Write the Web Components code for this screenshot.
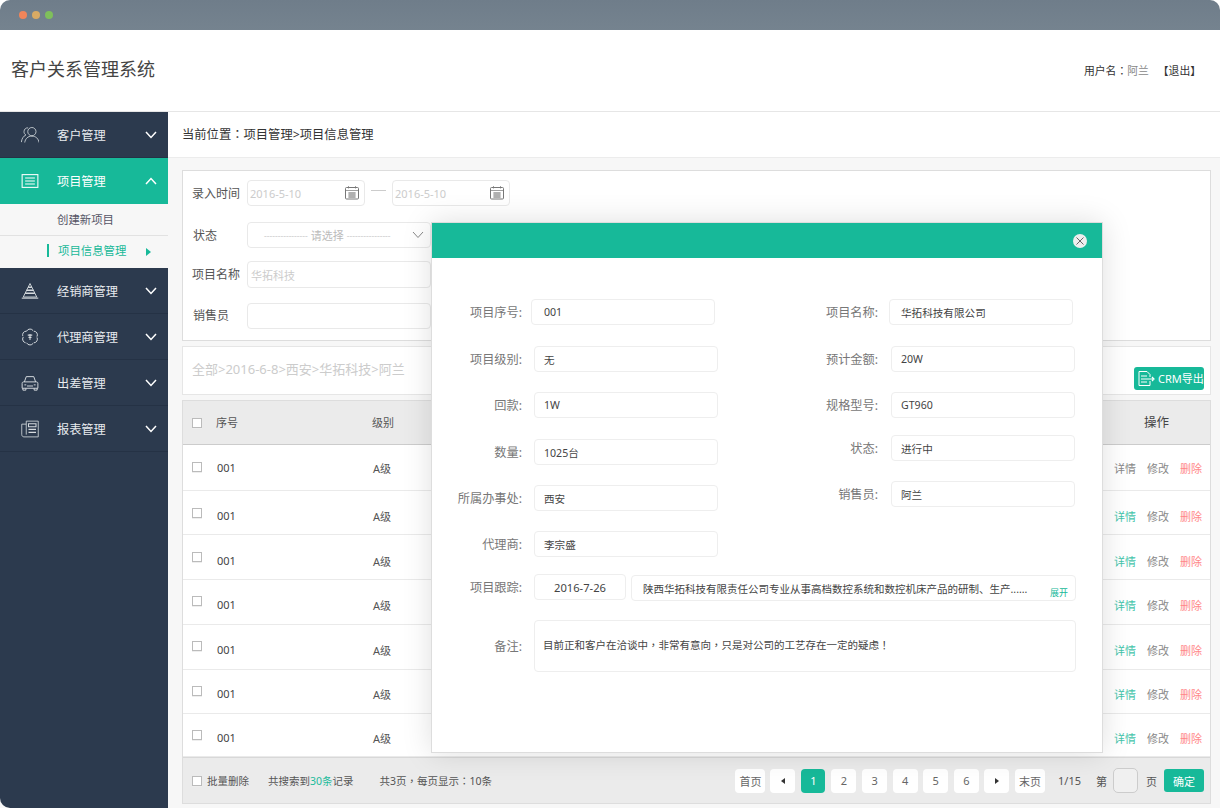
<!DOCTYPE html>
<html lang="zh-Hans"><head><meta charset="utf-8"><title>客户关系管理系统</title>
<style>
html,body{margin:0;padding:0;background:#fff;}
body{font-family:"Noto Sans","Noto Sans CJK SC",sans-serif;font-size:12px;color:#444;}
</style></head><body>
<crm-app>
  <title-bar slot="top"></title-bar>
  <app-header slot="top" title="客户关系管理系统"></app-header>
  <side-nav slot="side">
    <nav-item icon="people">客户管理</nav-item>
    <nav-item icon="list" active>项目管理</nav-item>
    <sub-item>创建新项目</sub-item>
    <sub-item current>项目信息管理</sub-item>
    <nav-item icon="pyramid">经销商管理</nav-item>
    <nav-item icon="flower">代理商管理</nav-item>
    <nav-item icon="car">出差管理</nav-item>
    <nav-item icon="paper">报表管理</nav-item>
  </side-nav>
  <main-area slot="main">
    <bread-bar>当前位置<span lang="zh-Hant" style='font-family:"Noto Sans CJK TC",sans-serif'>：</span>项目管理&gt;项目信息管理</bread-bar>
    <filter-panel></filter-panel>
    <crumb-panel></crumb-panel>
    <data-table></data-table>
  </main-area>
  <detail-modal slot="over"></detail-modal>
</crm-app>
<script>
const P=s=>`<span class="cp" lang="zh-Hant">${s}</span>`;
function def(name, css, html, setup){
  customElements.define(name, class extends HTMLElement{
    constructor(){super();const r=this.attachShadow({mode:'open'});
      r.innerHTML='<style>.cp{font-family:"Noto Sans CJK TC",sans-serif;}'+css+'</style>'+html;}
    connectedCallback(){ if(setup&&!this._d){this._d=1;setup(this,this.shadowRoot);} }
  });
}
const ICONS={
 people:'<circle cx="14.500" cy="7.500" r="5.500"/><path d="M5 22c.7-5 4-8.500 9.500-8.500s8.800 3.500 9.500 8.500"/><path d="M9.500 2.500C6.500 2 4 4.500 4 7.500c0 2 .8 3.500 2.500 4.500C3 13.500 1 17 .5 21.500"/>',
 list:'<rect x="1.500" y="3.500" width="21" height="17" stroke-width="1.400"/><path d="M5.500 8h13M5.500 12h13M5.500 16h13" stroke-width="1.400"/>',
 pyramid:'<path d="M12 2 3 20h18z" stroke-width="1.200"/><path d="M9.500 7h5M7.500 11h9M5.500 15h13" stroke-width="1.900"/><path d="M1 21.500h22" stroke-width="1.500"/>',
 flower:'<path d="M7.500 4.200A5 5 0 0 1 16.500 4.200A5 5 0 0 1 21 12A5 5 0 0 1 16.500 19.800A5 5 0 0 1 7.500 19.800A5 5 0 0 1 3 12A5 5 0 0 1 7.500 4.200z" stroke-dasharray="9.900 1.300" stroke-width="1.300"/><path d="M9 9.500h6M12 8v8M10 12.500h4" stroke-width="1.400"/>',
 car:'<path d="M4.500 10.500 7 3.500h10l2.500 7" stroke-width="1.300"/><path d="M1.500 12.500c0-1.300.9-2 2.200-2h16.600c1.300 0 2.200.7 2.200 2V19h-21z" stroke-width="1.300"/><path d="M2.500 19v2.500h4V19M17.500 19v2.500h4V19M8 16h8M4.500 14.500H7M17 14.500h2.500" stroke-width="1.300"/>',
 paper:'<path d="M7 1.500h16v21H4c-1.700 0-3-1.300-3-3V5.500h6"/><path d="M7 1.500v18"/><path d="M10 5h10v4H10zM10 12.500h10M10 16.500h10" stroke-width="1.400"/>'
};
const chev=(up)=>`<svg width="12" height="8" viewBox="0 0 12 8" fill="none" stroke="#fff" stroke-width="1.500"><path d="${up?'M1 7l5-5.500L11 7':'M1 1l5 5.500L11 1'}"/></svg>`;

def('crm-app',`:host{display:grid;grid-template-columns:168px 1fr;grid-template-rows:auto 1fr;width:1220px;height:808px;position:relative;overflow:hidden;border-radius:10px 10px 0 0;background:#f7f7f7;}
.top{grid-column:1/3;display:flex;flex-direction:column;}.side{display:flex;min-height:0;border-bottom-left-radius:10px;overflow:hidden;}.main{display:flex;min-width:0;min-height:0;}`,
`<div class="top"><slot name="top"></slot></div><div class="side"><slot name="side"></slot></div><div class="main"><slot name="main"></slot></div><slot name="over"></slot>`);

def('title-bar',`:host{display:flex;align-items:center;gap:5px;height:30px;padding-left:19px;box-sizing:border-box;background:linear-gradient(#6f7d8a,#75838f);}
i{width:8px;height:8px;border-radius:50%;display:block;}`,
`<i style="background:#f1855a"></i><i style="background:#d8aa64"></i><i style="background:#7fbf5b"></i>`);

def('app-header',`:host{display:flex;align-items:center;justify-content:space-between;height:82px;box-sizing:border-box;background:#fff;border-bottom:1px solid #e6e6e6;padding:0 24px 0 11px;}
h1{margin:0 0 5px;font-size:18px;font-weight:400;color:#444;}
.u{font-size:10.800px;color:#333;display:flex;gap:9px;margin-bottom:2px;margin-right:-5px;}.u span span.n{color:#888;}`,
`<h1></h1><div class="u"><span>用户名${P('：')}<span class="n">阿兰</span></span><span>【退出】</span></div>`,
(h,r)=>{r.querySelector('h1').textContent=h.getAttribute('title');h.removeAttribute('title');});

def('side-nav',`:host{display:block;width:168px;background:#2c3a4e;}`,`<slot></slot>`);

def('nav-item',`:host{display:flex;align-items:center;height:46px;box-sizing:border-box;padding-left:21px;color:#e8ebee;font-size:12.200px;border-bottom:1px solid #253245;}
:host([active]){background:#17b999;color:#fff;border-bottom:0;}
svg.ic{width:18px;height:18px;fill:none;stroke:#d5dade;stroke-width:1.100;flex:none;margin-right:18px;}
:host([active]) svg.ic{stroke:#fff;}
.t{flex:1;}.c{margin-right:11px;display:flex;}`,
`<svg class="ic" viewBox="0 0 24 24"></svg><span class="t"><slot></slot></span><span class="c"></span>`,
(h,r)=>{r.querySelector('.ic').innerHTML=ICONS[h.getAttribute('icon')];r.querySelector('.c').innerHTML=chev(h.hasAttribute('active'));});

def('sub-item',`:host{display:flex;align-items:center;height:32px;box-sizing:border-box;padding:0 17px 1px 57px;font-size:11.400px;color:#556;background:#f7f7f7;border-bottom:1px solid #e2e2e2;position:relative;}
:host([current]){color:#17b999;padding-left:58px;padding-bottom:4px;justify-content:space-between;border-bottom:0;}
.bar,.arr{display:none;}
:host([current]) .bar{display:block;position:absolute;left:47px;top:8px;width:2px;height:13px;background:#17b999;}
:host([current]) .arr{display:block;width:0;height:0;margin-top:3px;border-left:5px solid #17b999;border-top:4px solid transparent;border-bottom:4px solid transparent;}`,
`<span class="bar"></span><span><slot></slot></span><span class="arr"></span>`);

def('main-area',`:host{display:flex;flex-direction:column;flex:1;min-width:0;background:#f7f7f7;}`,`<slot></slot>`);

def('bread-bar',`:host{display:flex;align-items:center;height:46px;box-sizing:border-box;background:#fff;border-bottom:1px solid #ececec;padding:0 0 2px 14px;font-size:12.300px;color:#333;margin-bottom:12px;}`,`<slot></slot>`);

def('date-input',`:host{display:flex;align-items:center;justify-content:space-between;width:118px;height:26px;box-sizing:border-box;border:1px solid #e9e9e9;border-radius:4px;padding:0 4px 0 2px;color:#ccc;font-size:11px;background:#fff;}
svg{width:16px;height:16px;fill:none;stroke:#777;stroke-width:1;}`,
`<span><slot></slot></span><svg viewBox="0 0 16 16"><rect x="1.500" y="2.500" width="13" height="11.500" rx="1"/><path d="M1.500 5.500h13M4.500 1v2.500M11.500 1v2.500M4 8h8M4 10h8M4 12h8M6 7v6M8 7v6M10 7v6" stroke-width=".7"/></svg>`);

def('filter-panel',`:host{display:flex;flex-direction:column;margin:0 9px 0 14px;height:171px;box-sizing:border-box;border:1px solid #ddd;background:#fff;padding:9px 0 0 9px;font-size:12px;color:#555;}
.r{display:flex;align-items:center;height:26px;}
.r+.r{margin-top:16px}.r.b{margin-top:13px;height:27px}.r.c{margin-top:15px}
label{width:55px;flex:none;}label.n{padding-left:1px;width:54px;}
.r.b label{margin-bottom:2px}.r.c label{margin-bottom:3px}
.box{border:1px solid #e9e9e9;border-radius:4px;height:100%;box-sizing:border-box;width:184px;flex:none;display:flex;align-items:center;padding-left:3px;color:#ccc;font-size:11px;background:#fff;}
.d{width:15px;height:1px;background:#ccc;margin:0 6px 6px;}
.sel{justify-content:space-between;padding:0 6px 0 16px;color:#bbb;}
.sel span{white-space:nowrap;display:flex;gap:3px;align-items:center;}
.sel u{text-decoration:none;font-size:8.500px;color:#ccc;}
svg{width:12px;height:8px;fill:none;stroke:#888;flex:none;}`,
`<div class="r"><label>录入时间</label><date-input>2016-5-10</date-input><span class="d"></span><date-input>2016-5-10</date-input></div>
<div class="r"><label class="n">状态</label><div class="box sel"><span><u>----------------</u>请选择<u>----------------</u></span><svg viewBox="0 0 12 8"><path d="M1 1l5 5.500L11 1"/></svg></div></div>
<div class="r b"><label>项目名称</label><div class="box">华拓科技</div></div>
<div class="r c"><label class="n">销售员</label><div class="box"></div></div>`);

def('crumb-panel',`:host{display:flex;align-items:center;justify-content:space-between;margin:5px 9px 0 14px;height:49px;box-sizing:border-box;border:1px solid #e6e6e6;background:#fff;padding:0 6px 0 9px;font-size:13px;color:#ccc;}
.t{margin-bottom:4px}
.btn{display:flex;align-items:center;gap:3px;width:70px;height:23px;box-sizing:border-box;padding-left:3px;background:#17b999;border-radius:3px;color:#fff;font-size:11px;margin-top:15px;white-space:nowrap;}
svg{width:18px;height:17px;fill:none;stroke:#fff;stroke-width:1;flex:none;}`,
`<span class="t">全部&gt;2016-6-8&gt;西安&gt;华拓科技&gt;阿兰</span><div class="btn"><svg viewBox="0 0 18 17"><path d="M10 1.500H2v14h11V11M10 1.500l3 3V7"/><path d="M4 6h6M4 9h8M4 12h6"/><path d="M12 9h4M15 7l2 2-2 2" stroke-width="1.200"/></svg>CRM导出</div>`);

def('check-box',`:host{display:block;width:10px;height:10px;box-sizing:border-box;border:1px solid #bbb;background:#fff;box-shadow:0 1px 0 #eee;}`,``);

def('data-table',`:host{display:flex;flex-direction:column;margin:5px 9px 0 14px;font-size:11px;color:#444;border-left:1px solid #ddd;border-right:1px solid #ddd;}
.g{display:grid;grid-template-columns:24px 156px 1fr 96px;padding-left:9px;box-sizing:border-box;}
.h{height:45px;background:#ebebeb;border-top:1px solid #ddd;border-bottom:1px solid #ccc;align-items:center;color:#555;}
.h span{margin-bottom:2px}
.h .op{font-size:12.500px;text-align:center;color:#444;padding-right:11px;margin-bottom:3px}
.row{background:#fff;border-bottom:1px solid #eaeaea;position:relative;align-items:start;}
.row>*{margin-top:var(--t);}
.row check-box{margin-top:var(--c);}
.n{padding-left:1px;}.lv{padding-left:1px;color:#555}
.a{display:flex;gap:11px;}.a b{font-weight:400;color:#1dbb9c;opacity:.85}.a b.g2{color:#888;opacity:1}.a b.r2{color:#f88;opacity:1}
.f{display:flex;align-items:center;height:47px;box-sizing:border-box;background:#ebebeb;border-top:1px solid #d8d8d8;border-bottom:1px solid #ddd;padding-left:9px;color:#555;font-size:10.500px;white-space:nowrap;}
.f em{font-style:normal;color:#1dbb9c;}
.f .s1{margin-left:5px;}.f .s2{margin-left:19px;}.f .s3{margin-left:26px;}
pager-bar{margin-left:auto;}`,
`<div class="g h"><check-box></check-box><span>序号</span><span>级别</span><span class="op">操作</span></div><div id="rows"></div>
<div class="f"><check-box></check-box><span class="s1">批量删除</span><span class="s2">共搜索到<em>30条</em>记录</span><span class="s3">共3页${P('，')}每页显示${P('：')}10条</span><pager-bar></pager-bar></div>`,
(h,r)=>{
  const spec=[[46,17,15],[44,17,17],[45,17,18],[45,16,17],[45,16,17],[44,16,16],[43,16,16]];
  r.getElementById('rows').innerHTML=spec.map((s,i)=>`<div class="g row" style="height:${s[0]}px;--c:${s[1]}px;--t:${s[2]}px"><check-box></check-box><span class="n">001</span><span class="lv">A级</span><span class="a"><b class="${i==0?'g2':''}">详情</b><b class="g2">修改</b><b class="r2">删除</b></span></div>`).join('');
});

def('pager-bar',`:host{display:flex;align-items:center;font-size:11px;color:#555;padding-right:6px;flex:none;}
.p{display:flex;align-items:center;justify-content:center;flex:none;width:25px;height:24px;background:#fff;border-radius:4px;margin-right:5.600px;color:#666;}
.w{width:30px;margin-right:6px;}.on{background:#17b999;color:#fff;width:24px;margin-right:6px;}
.tri{width:0;height:0;border-top:3.500px solid transparent;border-bottom:3.500px solid transparent;}
.l{border-right:4px solid #333}.rr{border-left:4px solid #333}
.info{margin-left:7px;}.nth{margin-left:15px;}
.in{width:25px;height:25px;box-sizing:border-box;border:1px solid #ccc;border-radius:5px;background:#f0f0f0;margin:0 8px 0 6px;}
.ok{display:flex;align-items:center;justify-content:center;width:40px;height:23px;background:#17b999;border-radius:3px;color:#fff;margin-left:7px;}`,
`<span class="p w" style="margin-right:5px">首页</span><span class="p" style="margin-right:6px"><i class="tri l"></i></span><span class="p on">1</span><span class="p">2</span><span class="p">3</span><span class="p">4</span><span class="p">5</span><span class="p">6</span><span class="p"><i class="tri rr"></i></span><span class="p w">末页</span><span class="info">1/15</span><span class="nth">第</span><span class="in"></span><span>页</span><span class="ok">确定</span>`);

def('m-field',`:host{display:flex;align-items:center;height:26px;font-size:12.200px;color:#777;}
label{flex:none;width:var(--lw,90px);text-align:right;white-space:nowrap;}
.v{flex:none;margin-left:var(--g,12px);width:var(--w,184px);height:26px;box-sizing:border-box;border:1px solid #eee;border-radius:4px;background:#fff;display:flex;align-items:center;padding-left:var(--p,9px);color:#444;font-size:10.600px;white-space:nowrap;}`,
`<label></label><div class="v"><slot></slot></div>`,
(h,r)=>{r.querySelector('label').textContent=h.getAttribute('label');h.removeAttribute('label');});

def('detail-modal',`:host{position:absolute;left:431px;top:222px;width:672px;height:531px;box-sizing:border-box;border:1px solid #ddd;background:#fff;box-shadow:0 0 28px rgba(0,0,0,.13);display:flex;flex-direction:column;}
.hd{flex:none;height:35px;background:#17b999;display:flex;align-items:center;justify-content:flex-end;padding-right:15px;}
.x{width:14px;height:14px;border-radius:50%;background:#eee;display:flex;}
.x svg{width:14px;height:14px;stroke:#666;stroke-width:1;}
.two{display:flex;padding-top:41px;}
.col{display:flex;flex-direction:column;}
.l{width:368px;}
.r{--lw:78px;--g:13px;}
.full{display:flex;height:26px;margin-top:17px;font-size:12.200px;color:#777;align-items:center;}
.lb{width:90px;text-align:right;flex:none;margin-right:12px;}
.bx{box-sizing:border-box;border:1px solid #eee;border-radius:4px;height:26px;display:flex;align-items:center;color:#444;font-size:10.500px;white-space:nowrap;}
.date{width:92px;justify-content:center;font-size:11.200px;}
.long{width:445px;margin:2px 0 0 5px;padding-left:11px;position:relative;}
.more{position:absolute;right:7px;bottom:1px;font-size:9px;color:#17b999;}
.note{height:52px;margin-top:20px;}
.note .bx{width:542px;height:52px;padding:0 0 4px 8px;font-size:10.500px;}`,
`<div class="hd"><span class="x"><svg viewBox="0 0 14 14"><path d="M3.500 3.500l7 7M10.500 3.500l-7 7"/></svg></span></div>
<div class="two"><div class="col l">
 <m-field label="项目序号:" style="--g:9px;--p:12px;">001</m-field>
 <m-field label="项目级别:" style="margin-top:21px">无</m-field>
 <m-field label="回款:" style="margin-top:20px">1W</m-field>
 <m-field label="数量:" style="margin-top:21px">1025台</m-field>
 <m-field label="所属办事处:" style="margin-top:20px">西安</m-field>
 <m-field label="代理商:" style="margin-top:20px">李宗盛</m-field>
</div><div class="col r">
 <m-field label="项目名称:" style="--g:11px;--p:11px">华拓科技有限公司</m-field>
 <m-field label="预计金额:" style="margin-top:21px">20W</m-field>
 <m-field label="规格型号:" style="margin-top:20px">GT960</m-field>
 <m-field label="状态:" style="margin-top:17px">进行中</m-field>
 <m-field label="销售员:" style="margin-top:20px">阿兰</m-field>
</div></div>
<div class="full"><span class="lb">项目跟踪:</span><span class="bx date">2016-7-26</span><span class="bx long">陕西华拓科技有限责任公司专业从事高档数控系统和数控机床产品的研制、生产......<span class="more">展开</span></span></div>
<div class="full note"><span class="lb">备注:</span><span class="bx"><span>目前正和客户在洽谈中${P('，')}非常有意向${P('，')}只是对公司的工艺存在一定的疑虑${P('！')}</span></span></div>`);
</script>
</body></html>
